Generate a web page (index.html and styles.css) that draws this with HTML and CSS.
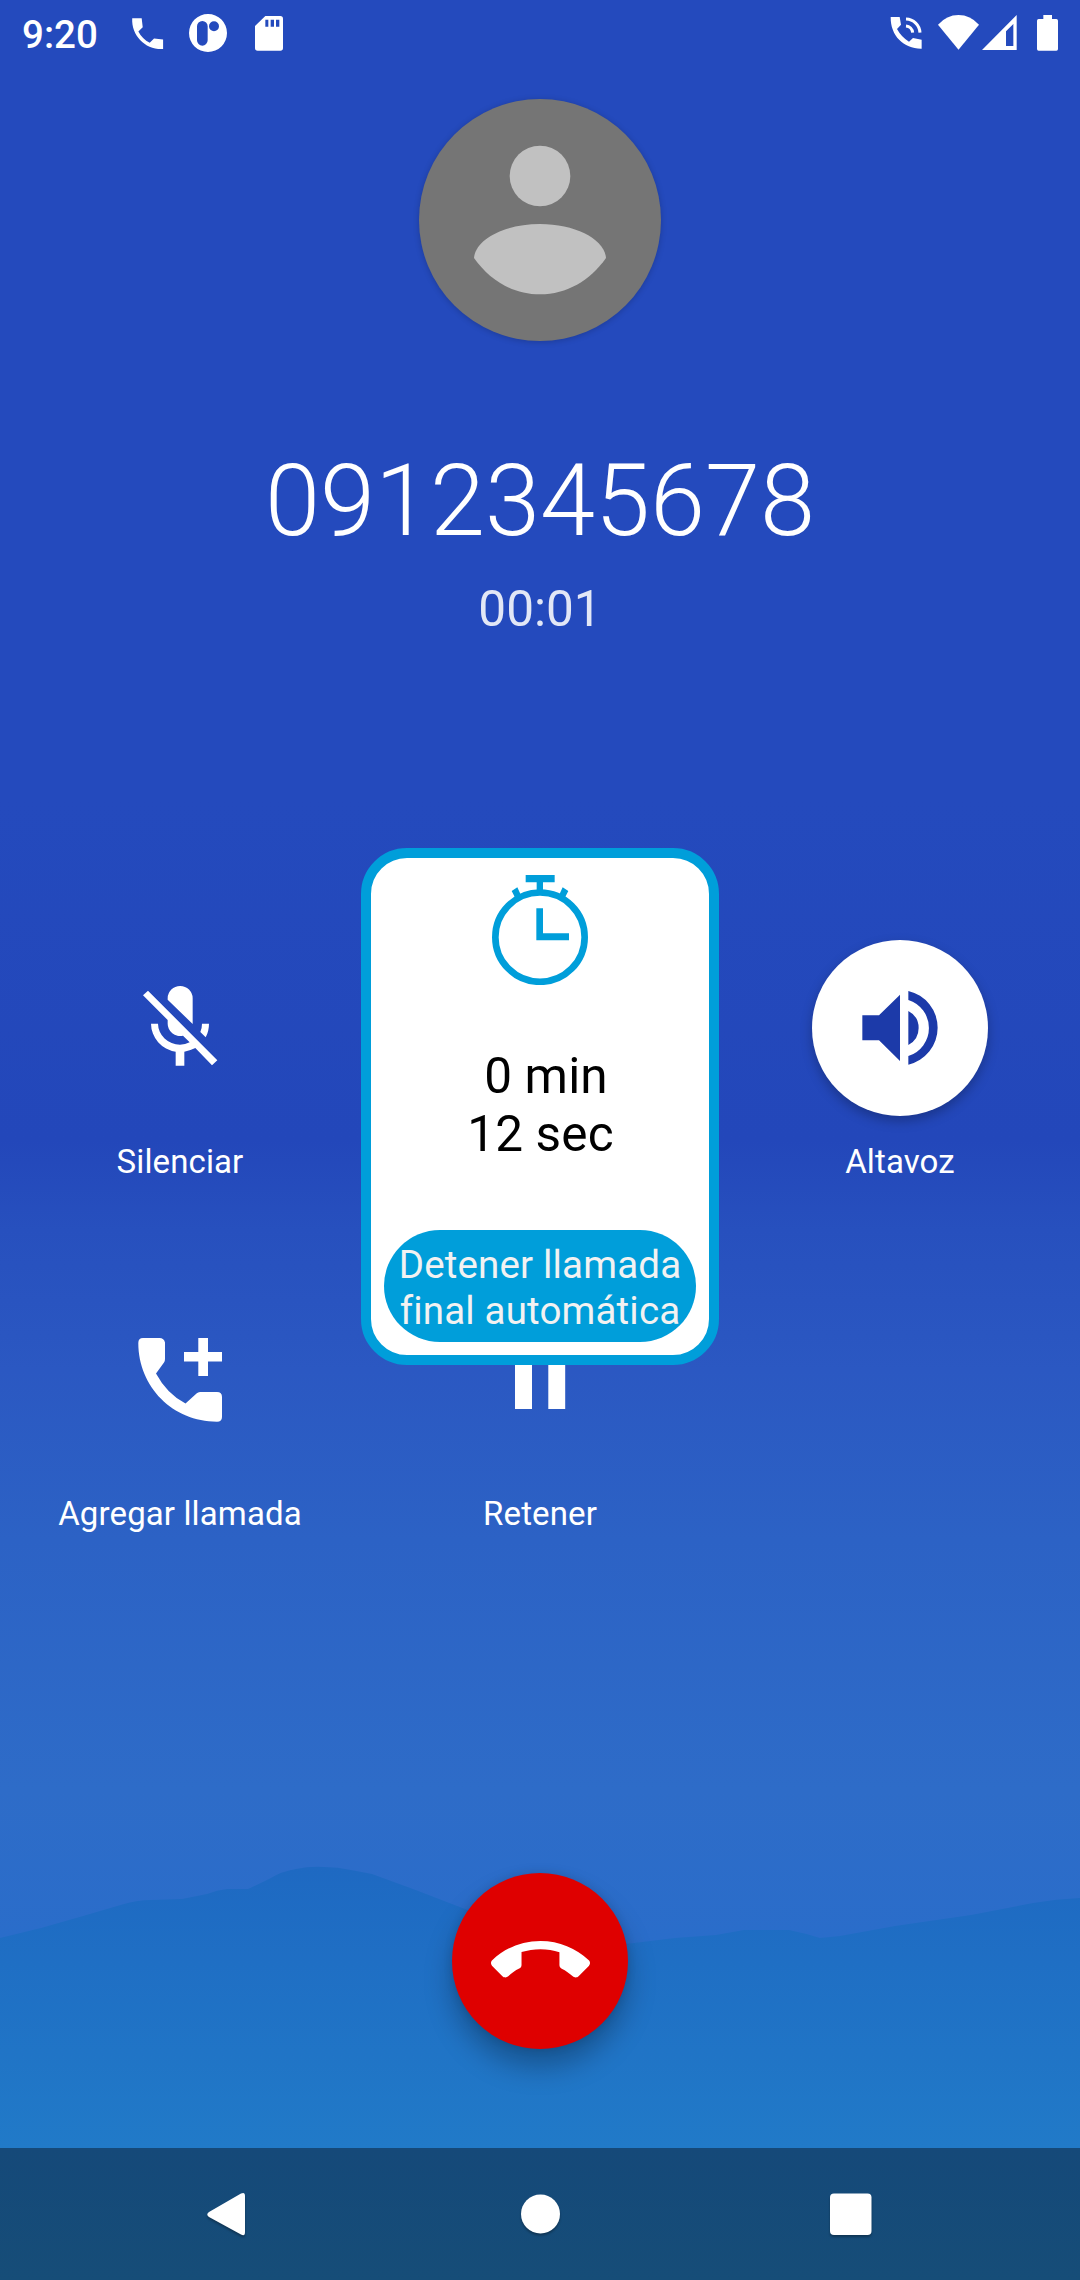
FILE: index.html
```html
<!DOCTYPE html>
<html lang="es">
<head>
<meta charset="utf-8">
<title>Llamada en curso</title>
<link rel="stylesheet" href="styles.css">
</head>
<body>
<div class="screen">
  <svg class="hills" viewBox="0 0 1080 300" aria-hidden="true">
    <defs>
      <linearGradient id="hill" x1="0" y1="0" x2="0" y2="1">
        <stop offset="0" stop-color="#1e69c2"/>
        <stop offset="1" stop-color="#217ac8"/>
      </linearGradient>
    </defs>
    <path fill="url(#hill)" d="M0 90L41 80L83 68L124 56Q138 52 151 52L182 51L207 46Q217 42 227 41L248 41L269 31Q282 23 296 21Q310 18 324 19Q338 19 351 22L372 26L413 41L465 61Q530 92 590 98Q612 98 634 95L675 90L716 87L744 82L789 82Q804 85 820 90L840 88L895 78L971 67L1033 55Q1056 51 1080 50V300H0Z"/>
  </svg>

  <header class="status-bar">
    <span class="clock">9:20</span>
    <svg class="ico-call" viewBox="0 0 24 24"><path d="M21 15.46l-5.27-.61-2.52 2.52c-2.83-1.44-5.15-3.75-6.59-6.59l2.53-2.53L8.54 3H3.03C2.45 13.18 10.82 21.55 21 20.97z"/></svg>
    <svg class="ico-app" viewBox="568 42 114 114"><path fill-rule="evenodd" d="M625 42a57 57 0 1 0 0 114a57 57 0 1 0 0-114zM592 79a16 16 0 0 1 32 0v42a16 16 0 0 1-32 0zM643 64a15 15 0 1 1 0 30a15 15 0 1 1 0-30z"/></svg>
    <svg class="ico-sd" viewBox="766 48 84 104"><path fill-rule="evenodd" d="M797 48H842Q850 48 850 56V144Q850 152 842 152H774Q766 152 766 144V78ZM797 59V80H806V59ZM813 59V80H823V59ZM829 59V80H839V59Z"/></svg>
    <span class="spacer"></span>
    <svg class="ico-talk" viewBox="90 48 96 100"><path d="M92 51H119L123 74L111 87Q124 111 147 125L159 114L185 119V146C132 147 91 108 92 51Z"/><path class="wave" d="M138 78A22 22 0 0 1 158 98M138 57A43 43 0 0 1 180 98"/></svg>
    <svg class="ico-wifi" viewBox="234 45 123 104"><path d="M234 74Q260 45 295.500 45T357 74L295.500 149Z"/></svg>
    <svg class="ico-signal" viewBox="367 45 104 105"><path fill-rule="evenodd" d="M471 45V150H367ZM461 72L439 94V138H461Z"/></svg>
    <svg class="ico-battery" viewBox="531 45 63 107"><path d="M550 45H576V57H589Q594 57 594 62V147Q594 152 589 152H536Q531 152 531 147V62Q531 57 536 57H550Z"/></svg>
  </header>

  <section class="caller">
    <svg class="avatar" viewBox="57 57 726 726"><circle cx="420" cy="288" r="91"/><path d="M222 534C226 478 314 432 420 432S614 478 618 534C570 602 500 643 420 643S270 602 222 534Z"/></svg>
    <h1 class="number">0912345678</h1>
    <p class="elapsed">00:01</p>
  </section>

  <main class="controls">
    <div class="control">
      <svg class="disc" viewBox="156 -60 528 528"><path d="M309 106L324 92L532 301L516 316L466 264Q450 272 433 275V317H407V275A86 86 0 0 1 333 191H354A66 64 0 0 0 420 254Q436 254 449 247L429 227A37 37 0 0 1 383 190V180ZM383 119V115A37.500 37 0 0 1 458 115V192ZM486 191H507Q507 213 497 232L481 216Q486 205 486 191Z"/></svg>
      <span class="label">Silenciar</span>
    </div>
    <div class="control"></div>
    <div class="control">
      <svg class="disc disc-on" viewBox="96 60 528 528"><path d="M247 286H297L360 224V423L297 361H247ZM385 273A57.500 57.500 0 0 1 385 375ZM385 213A113.400 113.400 0 0 1 385 434V408A88 88 0 0 0 385 240Z"/></svg>
      <span class="label">Altavoz</span>
    </div>
    <div class="control">
      <svg class="disc" viewBox="92 1292 176 176"><path d="M143 1338H159.500Q164 1338 165 1342.500V1359Q165 1361 164 1362.500L156 1373.500Q167 1394 185.500 1403.500L196.500 1393.500Q198 1392 200 1392H217Q222 1392 222 1397V1417Q222 1421.700 217 1421.700C173 1421.700 138.300 1387 138.300 1343Q138.300 1338 143 1338ZM198.300 1338H208V1352H222V1361.500H208V1376H198.300V1361.500H184V1352H198.300Z"/></svg>
      <span class="label">Agregar llamada</span>
    </div>
    <div class="control">
      <svg class="disc" viewBox="452 1292 176 176"><path d="M515 1351H532V1409H515ZM548.300 1351H565.200V1409H548.300Z"/></svg>
      <span class="label">Retener</span>
    </div>
    <div class="control"></div>
  </main>

  <div class="end-row">
    <div class="end-call"><svg viewBox="0 0 24 24"><path d="M12 9c-1.600 0-3.150.25-4.600.72v3.100c0 .39-.23.74-.56.9-.98.49-1.870 1.120-2.660 1.850-.18.18-.43.28-.7.28-.28 0-.53-.11-.71-.29L.29 13.080c-.18-.17-.29-.42-.29-.7 0-.28.11-.53.29-.71C3.340 8.780 7.460 7 12 7s8.660 1.780 11.710 4.670c.18.18.29.43.29.71 0 .28-.11.53-.29.71l-2.480 2.480c-.18.18-.43.29-.71.29-.27 0-.52-.11-.7-.28-.79-.74-1.690-1.360-2.670-1.850-.33-.16-.56-.5-.56-.9v-3.100C15.150 9.250 13.600 9 12 9z"/></svg></div>
  </div>

  <nav class="nav-bar">
    <svg viewBox="0 0 66 66"><path d="M48 15V51Q48 56 44 53.500L12 36Q8.500 33.500 12 31L44 12.500Q48 10.500 48 15Z"/></svg>
    <svg viewBox="0 0 66 66"><circle cx="33.500" cy="33" r="19.500"/></svg>
    <svg viewBox="0 0 66 66"><rect x="13" y="12.500" width="41.500" height="41.500" rx="4"/></svg>
  </nav>

  <aside class="timer">
    <svg class="stopwatch" viewBox="426 104 288 331"><circle cx="570" cy="290.500" r="134"/><path d="M527 104H614V126H579V150H560V126H527ZM559 204H579V279H657V300H559ZM485 152L502 141L514 167L497 175ZM655 152L638 141L626 167L643 175Z"/></svg>
    <p class="remaining"><span class="minutes">0 min</span><span class="seconds">12 sec</span></p>
    <button class="stop">Detener llamada<br>final automática</button>
  </aside>
</div>
</body>
</html>
```
FILE: styles.css
```css
* { box-sizing: border-box; }
body { margin: 0; font-family: Roboto, sans-serif; }
p, h1 { margin: 0; }

.screen {
  position: relative;
  width: 1080px;
  height: 2280px;
  overflow: hidden;
  display: flex;
  flex-direction: column;
  color: #fff;
  background: linear-gradient(#244abd 0, #244abd 800px, #2347ba 1140px, #2750be 1230px, #2b58c2 1370px, #2c62c5 1540px, #2e6cc8 1790px, #2a6dca 1940px);
}
svg { display: block; fill: #fff; flex: none; }

.hills {
  position: absolute;
  left: 0;
  top: 1848px;
  width: 1080px;
  height: 300px;
}

/* Status bar */
.status-bar {
  position: relative;
  height: 66px;
  display: flex;
  padding: 0 22px;
}
.clock { width: 77px; font-size: 38.5px; font-weight: 500; line-height: 70px; white-space: nowrap; }
.spacer { flex: 1; }
.ico-call { width: 41.25px; height: 41.25px; margin: 12.900px 0 0 28px; }
.ico-app { width: 38px; height: 38px; margin: 14px 0 0 21px; }
.ico-sd { width: 28px; height: 34.700px; margin: 16px 0 0 28px; }
.ico-talk { width: 32px; height: 33.300px; margin: 16px 16px 0 0; }
.wave { fill: none; stroke: #fff; stroke-width: 9; }
.ico-wifi { width: 41px; height: 34.700px; margin: 15px 3.300px 0 0; }
.ico-signal { width: 34.700px; height: 35px; margin: 15px 20px 0 0; }
.ico-battery { width: 21px; height: 35.700px; margin-top: 15px; }

/* Caller */
.caller {
  height: 874px;
  padding-top: 33px;
  display: flex;
  flex-direction: column;
  align-items: center;
}
.avatar {
  width: 242px;
  height: 242px;
  border-radius: 50%;
  background: #757575;
  fill: #c1c1c1;
  box-shadow: 0 1px 6px rgba(0, 0, 0, .2);
}
.number { margin-top: 100px; font-size: 99.200px; font-weight: 300; line-height: 120px; }
.elapsed { margin-top: 18px; font-size: 49.500px; line-height: 60px; opacity: .87; }

/* Call controls */
.controls {
  display: grid;
  grid-template-columns: repeat(3, 360px);
  grid-auto-rows: 352px;
  height: 933px;
}
.control { display: flex; flex-direction: column; align-items: center; }
.disc { width: 176px; height: 176px; border-radius: 50%; }
.disc-on { background: #fff; fill: #1c3aa9; box-shadow: 0 5px 12px rgba(0, 0, 0, .26); }
.label { margin-top: 26px; font-size: 33px; line-height: 40px; letter-spacing: .12px; }

.end-row { position: relative; display: flex; justify-content: center; height: 275px; }
.end-call {
  width: 176px;
  height: 176px;
  border-radius: 50%;
  background: #df0000;
  display: grid;
  place-items: center;
  box-shadow: 0 18px 28px rgba(0, 0, 0, .27), 0 0 10px rgba(0, 0, 0, .12);
}
.end-call svg { width: 99px; height: 99px; }

.nav-bar {
  position: relative;
  height: 132px;
  padding: 0 197px;
  display: flex;
  align-items: center;
  justify-content: space-between;
  background: linear-gradient(#154979, #164d78);
}
.nav-bar svg { width: 66px; height: 66px; filter: drop-shadow(0 2px 1px rgba(0, 0, 0, .3)); }

/* Floating auto-hang-up timer */
.timer {
  position: absolute;
  left: 361px;
  top: 848px;
  width: 358px;
  height: 517px;
  border: 10px solid #009eda;
  border-radius: 46px;
  background: #fff;
  color: #000;
  padding-top: 17px;
  display: flex;
  flex-direction: column;
  align-items: center;
}
.stopwatch { width: 96px; height: 110.300px; fill: #009eda; }
.stopwatch circle { fill: none; stroke: #009eda; stroke-width: 20; }
.remaining {
  margin-top: 62px;
  display: flex;
  flex-direction: column;
  align-items: center;
  font-size: 49.500px;
  line-height: 58px;
  letter-spacing: .15px;
}
.minutes { padding-left: 12px; }
.seconds { padding-left: 1px; }
.stop {
  margin-top: 67px;
  width: 312px;
  height: 112px;
  padding: 3px 0 0;
  border: 0;
  border-radius: 56px;
  background: #009eda;
  color: #f2f2f2;
  font: 38.500px/45.500px Roboto, sans-serif;
  letter-spacing: .17px;
  white-space: nowrap;
}
```
